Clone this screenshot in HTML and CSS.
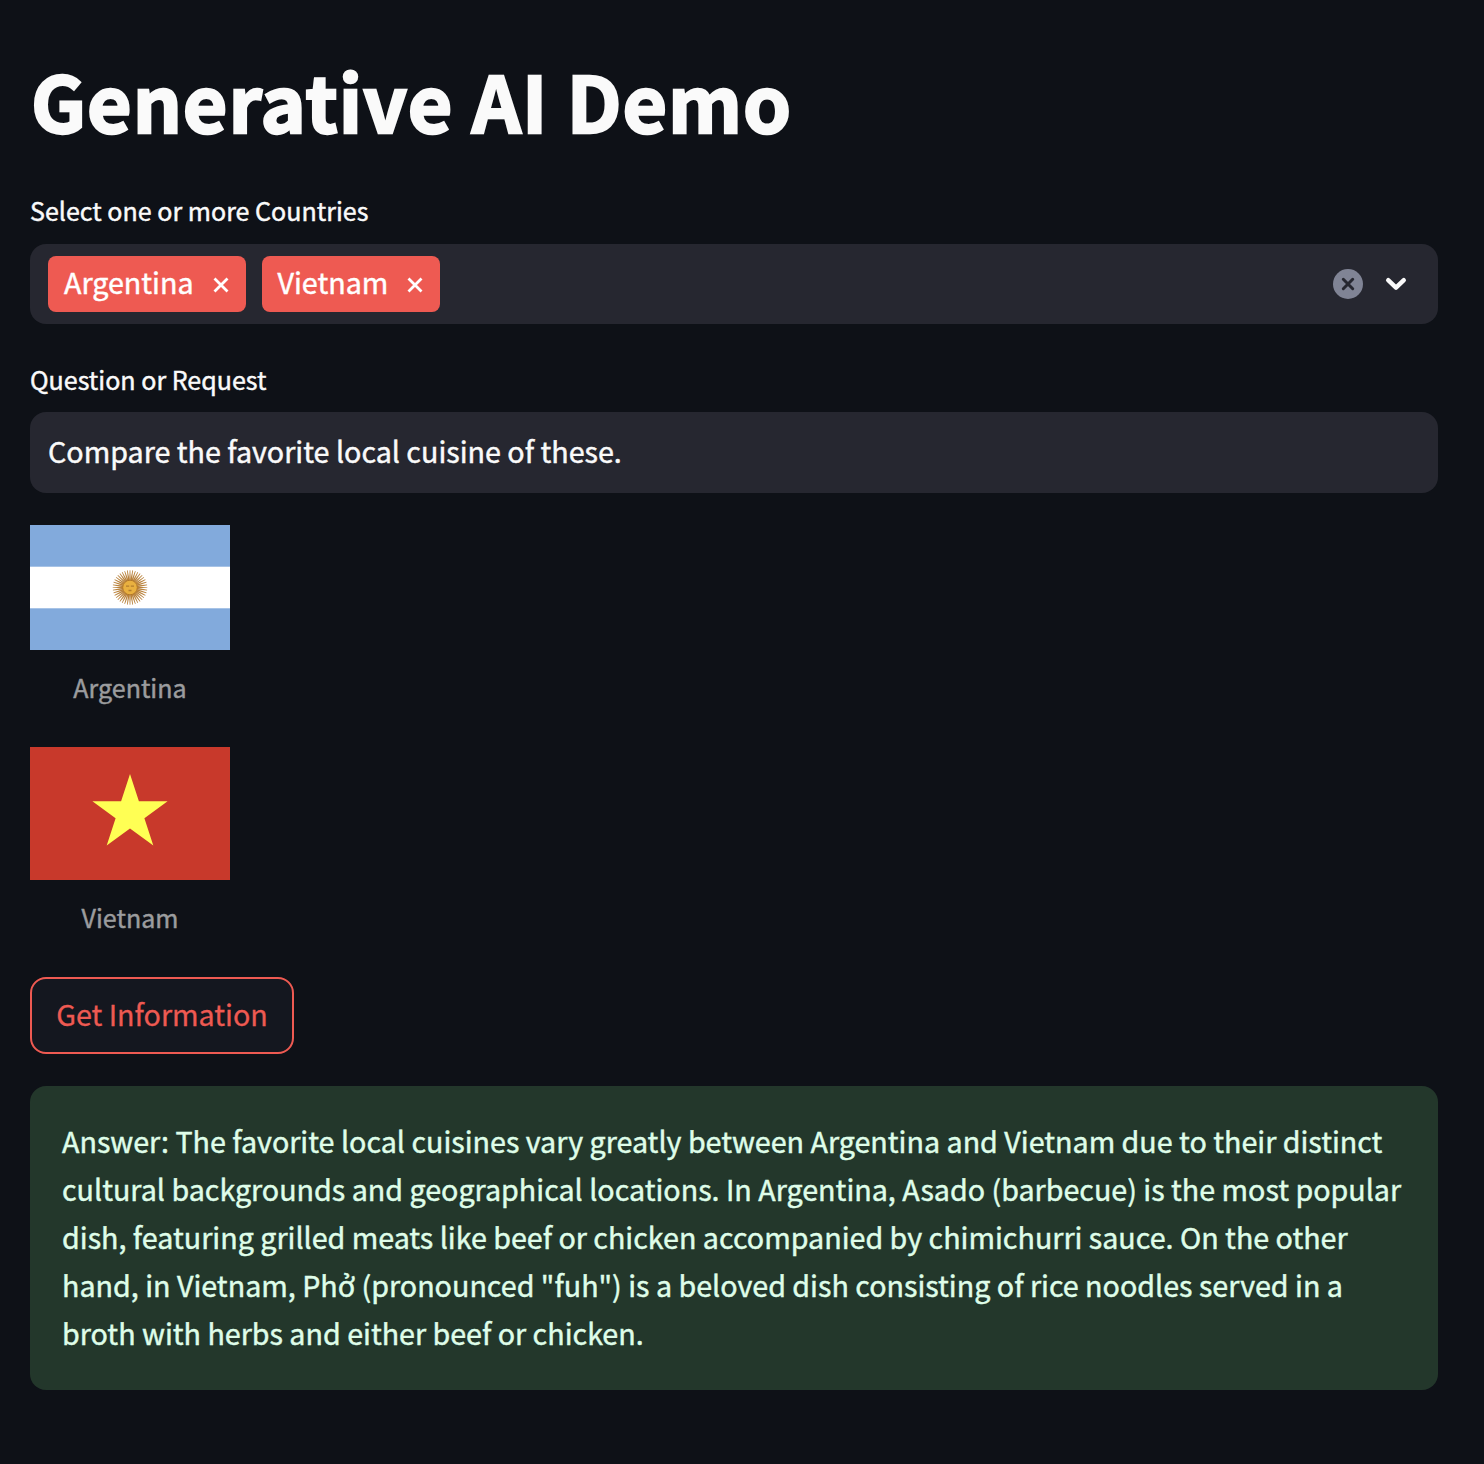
FILE: index.html
```html
<!DOCTYPE html>
<html lang="en">
<head>
<meta charset="utf-8">
<title>Generative AI Demo</title>
<link rel="stylesheet" href="styles.css">
</head>
<body>
<main class="app">
  <h1 class="title">Generative AI Demo</h1>

  <div class="field">
    <div class="label">Select one or more Countries</div>
    <div class="control select">
      <span class="tag"><span>Argentina</span><svg class="x" viewBox="0 0 16 16"><path d="M1.500 1.500l13 13M14.500 1.500l-13 13"/></svg></span>
      <span class="tag tag-vietnam"><span>Vietnam</span><svg class="x" viewBox="0 0 16 16"><path d="M1.500 1.500l13 13M14.500 1.500l-13 13"/></svg></span>
      <span class="actions">
        <svg class="clear" viewBox="0 0 30 30"><circle cx="15" cy="15" r="15"/><path d="M10.300 10.300l9.400 9.400M19.700 10.300l-9.400 9.400"/></svg>
        <svg class="chevron" viewBox="0 0 22 14"><path d="M3.200 3.200L11 10.700l7.800-7.500"/></svg>
      </span>
    </div>
  </div>

  <div class="field question">
    <div class="label">Question or Request</div>
    <div class="control input"><span>Compare the favorite local cuisine of these.</span></div>
  </div>

  <figure class="flag">
    <svg class="argentina" viewBox="0 0 200 125">
      <defs>
        <path id="ray" d="M-.8-7L-.35-17.300H.35L.8-7z"/>
        <g id="rays">
          <use href="#ray"/>
          <use href="#ray" transform="rotate(9)"/>
          <use href="#ray" transform="rotate(18)"/>
          <use href="#ray" transform="rotate(27)"/>
          <use href="#ray" transform="rotate(36)"/>
        </g>
      </defs>
      <rect width="200" height="125" fill="#82aadc"/>
      <rect y="41.700" width="200" height="41.600" fill="#fff"/>
      <g transform="translate(100 62.500)">
        <g fill="#b9823c">
          <use href="#rays"/>
          <use href="#rays" transform="rotate(45)"/>
          <use href="#rays" transform="rotate(90)"/>
          <use href="#rays" transform="rotate(135)"/>
          <use href="#rays" transform="rotate(180)"/>
          <use href="#rays" transform="rotate(225)"/>
          <use href="#rays" transform="rotate(270)"/>
          <use href="#rays" transform="rotate(315)"/>
        </g>
        <circle r="7.300" fill="#e9b040" stroke="#b27728"/>
        <path d="M-4-1.300h3.200M.8-1.300H4M-1.500 3h3" fill="none" stroke="#b27c2c" stroke-width="1.300"/>
      </g>
    </svg>
    <figcaption>Argentina</figcaption>
  </figure>

  <figure class="flag">
    <svg class="vietnam" viewBox="0 0 200 133">
      <rect width="200" height="133" fill="#c8392b"/>
      <path d="M100 27l8.900 27.300H137.600L114.400 71.200 123.300 98.500 100 81.600 76.700 98.500 85.600 71.200 62.400 54.300H91.100z" fill="#ffff54"/>
    </svg>
    <figcaption>Vietnam</figcaption>
  </figure>

  <button class="submit" type="button">Get Information</button>

  <section class="answer">Answer: The favorite local cuisines vary greatly between Argentina and Vietnam due to their distinct<br>cultural backgrounds and geographical locations. In Argentina, Asado (barbecue) is the most popular<br>dish, featuring grilled meats like beef or chicken accompanied by chimichurri sauce. On the other<br>hand, in Vietnam, Phở (pronounced "fuh") is a beloved dish consisting of rice noodles served in a<br>broth with herbs and either beef or chicken.</section>
</main>
</body>
</html>
```
FILE: styles.css
```css
* { box-sizing: border-box; }
body {
  margin: 0;
  background: #0e1117;
  color: #fafafa;
  font-family: "Noto Sans CJK SC", "Noto Sans", sans-serif;
  font-size: 28.660px;
  -webkit-text-stroke: .45px currentColor;
}
.app {
  display: flex;
  flex-direction: column;
  align-items: flex-start;
  width: 1484px;
  height: 1464px;
  padding: 49px 46px 0 30px;
}
.title {
  margin: 0 0 43px;
  padding-left: 1px;
  height: 102px;
  font-size: 76.800px;
  line-height: 102px;
  font-weight: 700;
  letter-spacing: .98px;
  white-space: nowrap;
  -webkit-text-stroke-width: 2.400px;
}
.field { width: 100%; margin-bottom: 39px; }
.label {
  height: 50px;
  line-height: 32px;
  font-size: 25.060px;
}
.control {
  display: flex;
  align-items: center;
  width: 100%;
  height: 80px;
  padding: 0 18px;
  border-radius: 16px;
  background: #262730;
}
.select { gap: 16px; }
.question { margin-bottom: 32px; }
.question .label { height: 49px; }
.input { height: 81px; padding-bottom: 4px; }
.tag {
  display: flex;
  align-items: center;
  justify-content: space-between;
  width: 198px;
  height: 56px;
  padding: 0 17.500px 0 16px;
  border-radius: 8px;
  background: #ee5a52;
  color: #fff;
}
.tag-vietnam { width: 178px; padding-left: 15.500px; }
.tag span { height: 56px; line-height: 51px; }
.x { width: 16px; height: 16px; margin-top: 1px; fill: none; stroke: #fff; stroke-width: 2.800; }
.actions { display: flex; align-items: center; gap: 22px; margin-left: auto; padding-right: 13px; }
.clear { width: 30px; height: 30px; fill: #808495; }
.clear path { stroke: #262730; stroke-width: 3; stroke-linecap: round; }
.chevron { width: 22px; height: 14px; fill: none; stroke: #fafafa; stroke-width: 4.400; stroke-linecap: round; stroke-linejoin: round; }
.flag { width: 200px; margin: 0 0 40px; }
.flag svg { display: block; width: 200px; }
.argentina { height: 125px; }
.vietnam { height: 133px; }
.flag figcaption {
  margin-top: 18px;
  height: 39px;
  line-height: 39px;
  font-size: 25.060px;
  text-align: center;
  color: #9b9c9e;
}
.submit {
  width: 264px;
  height: 77px;
  border: 2px solid #ee5a52;
  border-radius: 16px;
  background: #14171f;
  color: #ee5a52;
  font: inherit;
  padding: 0 0 4px;
  -webkit-text-stroke: .3px currentColor;
}
.answer {
  width: 100%;
  height: 304px;
  margin-top: 32px;
  padding: 31px 32px;
  border-radius: 16px;
  background: #23372b;
  color: #dffde9;
  line-height: 48px;
  white-space: nowrap;
}
```
